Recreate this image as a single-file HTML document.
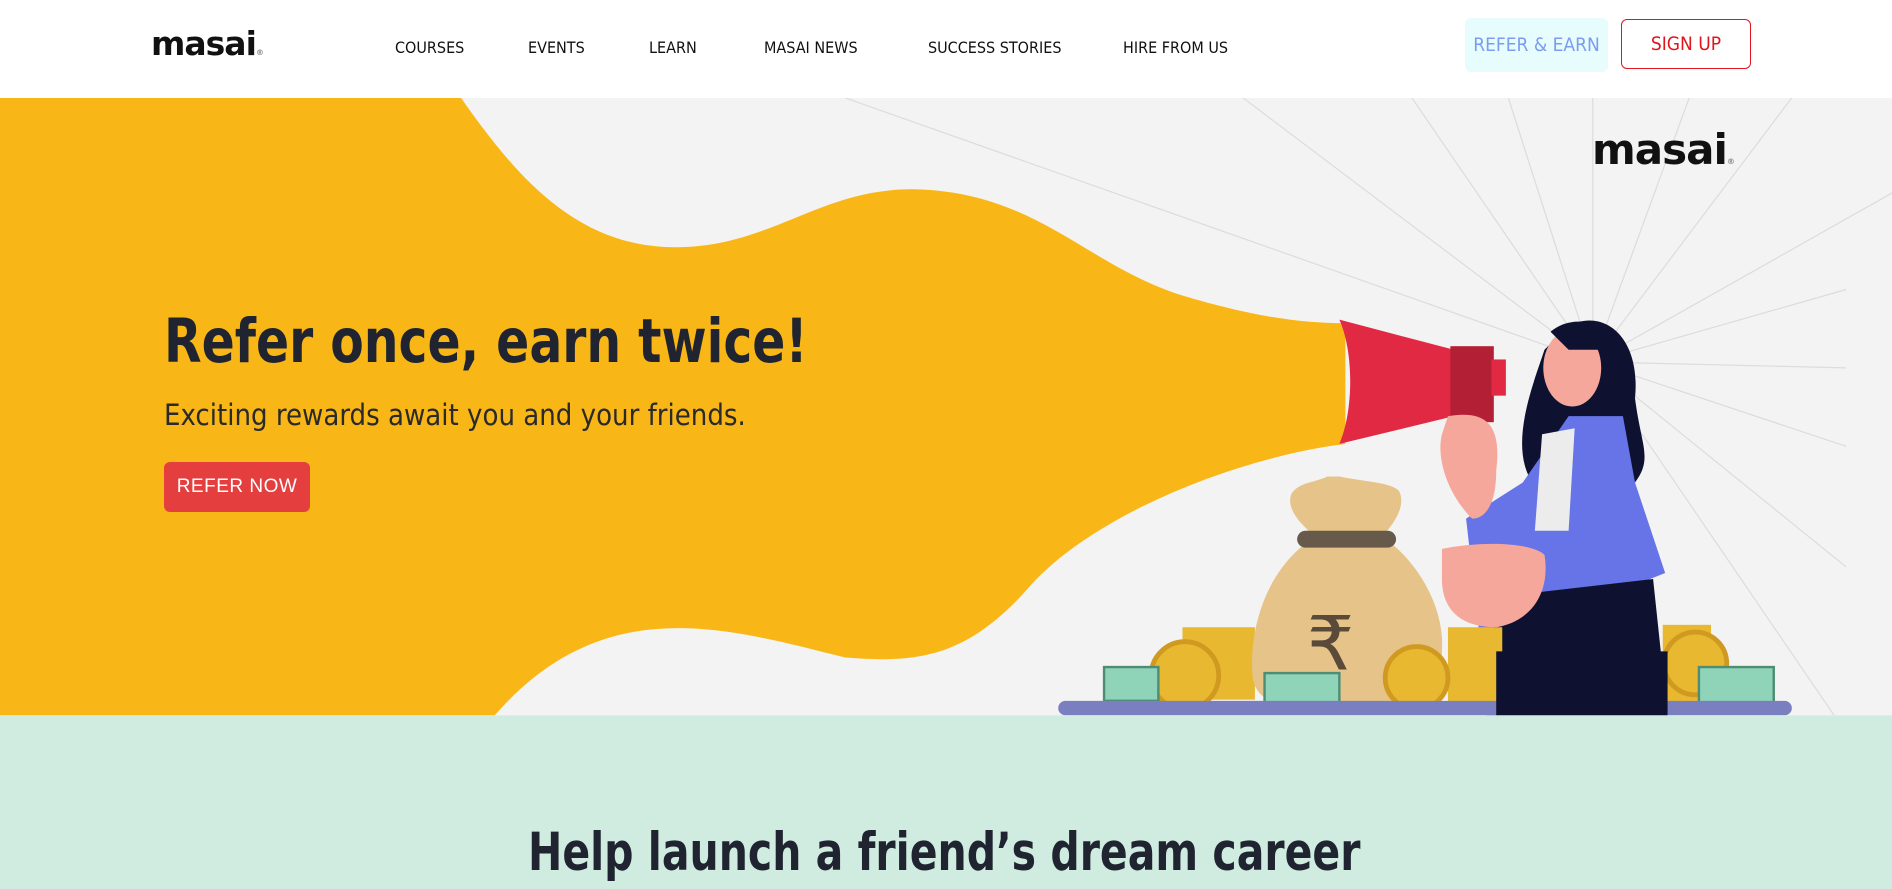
<!DOCTYPE html>
<html><head><meta charset="utf-8">
<style>
*{margin:0;padding:0;box-sizing:border-box}
html,body{width:1892px;height:889px;overflow:hidden;background:#fff;font-family:"Liberation Sans",sans-serif}
.hdr{position:absolute;left:0;top:0;width:1892px;height:98px;background:#fff}
.nav{position:absolute;top:38px;font-size:16px;color:#111;font-family:"DejaVu Sans Condensed","Liberation Sans",sans-serif}
.btn1{position:absolute;left:1465px;top:18px;width:143px;height:54px;background:#e6fcfd;border-radius:6px;color:#7c9cf0;font-size:19px;display:flex;align-items:center;justify-content:center;font-family:"DejaVu Sans Condensed",sans-serif}
.btn2{position:absolute;left:1621px;top:19px;width:130px;height:50px;border:1.5px solid #e0161e;border-radius:6px;color:#e0161e;font-size:19px;display:flex;align-items:center;justify-content:center;font-family:"DejaVu Sans Condensed",sans-serif}
svg.bg{position:absolute;left:0;top:0}
.h1{position:absolute;left:164px;top:306px;font-size:61px;font-weight:bold;color:#1f2430;font-family:"DejaVu Sans Condensed","Liberation Sans",sans-serif;transform:scaleX(0.89);transform-origin:0 0;white-space:nowrap}
.sub{position:absolute;left:164px;top:398px;font-size:29px;color:#2a2a2a;font-family:"DejaVu Sans Condensed","Liberation Sans",sans-serif}
.rn{position:absolute;left:164px;top:462px;width:146px;height:50px;background:#e53e3e;border-radius:6px;color:#fff;font-size:19px;display:flex;align-items:center;justify-content:center;letter-spacing:.5px}
.h2{position:absolute;left:528px;top:822px;font-size:53px;font-weight:bold;color:#1f2430;font-family:"DejaVu Sans Condensed","Liberation Sans",sans-serif;transform:scaleX(0.86);transform-origin:0 0;white-space:nowrap}
.logo{position:absolute;font-weight:bold;color:#111;font-family:"DejaVu Sans","Liberation Sans",sans-serif;letter-spacing:-1px}
</style></head><body>
<svg class="bg" width="1892" height="889" viewBox="0 0 1568 737" preserveAspectRatio="none">
<rect x="0" y="81" width="1568" height="512" fill="#f3f3f3"/>
<g stroke="#dcdcdc" stroke-width="1">
<line x1="1320" y1="300" x2="700" y2="81"/><line x1="1320" y1="300" x2="1030" y2="81"/><line x1="1320" y1="300" x2="1170" y2="81"/><line x1="1320" y1="300" x2="1250" y2="81"/><line x1="1320" y1="300" x2="1320" y2="81"/><line x1="1320" y1="300" x2="1400" y2="81"/><line x1="1320" y1="300" x2="1485" y2="81"/><line x1="1320" y1="300" x2="1568" y2="160"/><line x1="1320" y1="300" x2="1530" y2="240"/><line x1="1320" y1="300" x2="1530" y2="305"/><line x1="1320" y1="300" x2="1530" y2="370"/><line x1="1320" y1="300" x2="1530" y2="470"/><line x1="1320" y1="300" x2="1520" y2="593"/>
</g>
<path d="M0 81 L382 81 C430 150 480 205 560 205 C640 205 680 155 760 157 C860 160 900 220 980 245 C1040 263 1080 268 1115 268 L1115 368 C1020 380 900 430 850 490 C800 545 760 550 700 545 C600 520 500 490 410 593 L0 593 Z" fill="#f9b617"/>
<path d="M1110 265 L1205 290 L1205 345 L1110 368 C1122 340 1122 292 1110 265 Z" fill="#e12943"/>
<rect x="1202" y="287" width="36" height="63" fill="#b31f35"/>
<rect x="1236" y="298" width="12" height="30" fill="#e12943"/>
<path d="M1300 270 C1330 255 1360 280 1355 330 C1360 370 1370 380 1355 400 L1270 400 C1250 370 1270 320 1280 290 Z" fill="#0e1130"/>
<ellipse cx="1303" cy="305" rx="24" ry="32" fill="#f5a79b"/>
<path d="M1285 275 C1300 262 1330 262 1335 290 L1300 290 Z" fill="#0e1130"/>
<path d="M1262 400 L1300 345 L1345 345 L1355 400 L1380 475 L1330 495 L1300 560 L1230 560 L1215 430 Z" fill="#6674e8"/>
<path d="M1278 360 L1305 355 L1300 440 L1272 440 Z" fill="#ececec"/>
<path d="M1240 495 L1370 480 L1382 593 L1232 593 Z" fill="#0e1130"/>
<path d="M1200 345 C1230 340 1245 350 1240 390 C1240 420 1230 430 1220 430 C1200 410 1190 380 1195 360 Z" fill="#f5a79b"/>
<path d="M1195 455 C1230 448 1270 450 1280 460 C1285 490 1270 515 1240 520 C1205 520 1195 500 1195 480 Z" fill="#f5a79b"/>
<rect x="980" y="520" width="60" height="60" fill="#e8b830"/>
<rect x="1200" y="520" width="45" height="65" fill="#e8b830"/>
<rect x="1378" y="518" width="40" height="65" fill="#e8b830"/>
<path d="M1100 395 C1090 400 1075 400 1070 410 C1065 425 1085 440 1090 445 C1050 470 1035 520 1038 560 C1040 585 1070 590 1110 588 C1170 588 1195 570 1195 540 C1198 500 1170 460 1145 445 C1155 435 1165 420 1160 408 C1155 400 1135 400 1110 395 Z" fill="#e6c489"/>
<rect x="1075" y="440" width="82" height="14" rx="7" fill="#675a4b"/>
<text x="1083" y="555" font-size="62" fill="#5a4a3a" font-family="DejaVu Sans">₹</text>
<circle cx="982" cy="560" r="28" fill="#e8b830" stroke="#d09a20" stroke-width="4"/>
<circle cx="1174" cy="562" r="26" fill="#e8b830" stroke="#d09a20" stroke-width="4"/>
<circle cx="1405" cy="550" r="26" fill="#e8b830" stroke="#d09a20" stroke-width="4"/>
<rect x="915" y="553" width="45" height="28" fill="#8fd3b8" stroke="#4e8d74" stroke-width="2"/>
<rect x="1048" y="558" width="62" height="30" fill="#8fd3b8" stroke="#4e8d74" stroke-width="2"/>
<rect x="1408" y="553" width="62" height="30" fill="#8fd3b8" stroke="#4e8d74" stroke-width="2"/>
<rect x="877" y="581" width="608" height="12" rx="6" fill="#7a80bf"/>
<rect x="1240" y="540" width="142" height="53" fill="#0e1130"/>
<rect x="0" y="593" width="1568" height="144" fill="#d0ece0"/>
</svg>
<div class="hdr"></div>
<div class="logo" style="left:151px;top:24px;font-size:33px">masa<span>i</span><span style="font-size:8px;color:#888">®</span></div>
<div class="logo" style="left:1592px;top:125px;font-size:42px">masai<span style="font-size:8px;color:#888">®</span></div>
<div class="nav" style="left:395px">COURSES</div>
<div class="nav" style="left:528px">EVENTS</div>
<div class="nav" style="left:649px">LEARN</div>
<div class="nav" style="left:764px">MASAI NEWS</div>
<div class="nav" style="left:928px">SUCCESS STORIES</div>
<div class="nav" style="left:1123px">HIRE FROM US</div>
<div class="btn1">REFER &amp; EARN</div>
<div class="btn2">SIGN UP</div>
<div class="h1">Refer once, earn twice!</div>
<div class="sub">Exciting rewards await you and your friends.</div>
<div class="rn">REFER NOW</div>
<div class="h2">Help launch a friend’s dream career</div>
</body></html>
